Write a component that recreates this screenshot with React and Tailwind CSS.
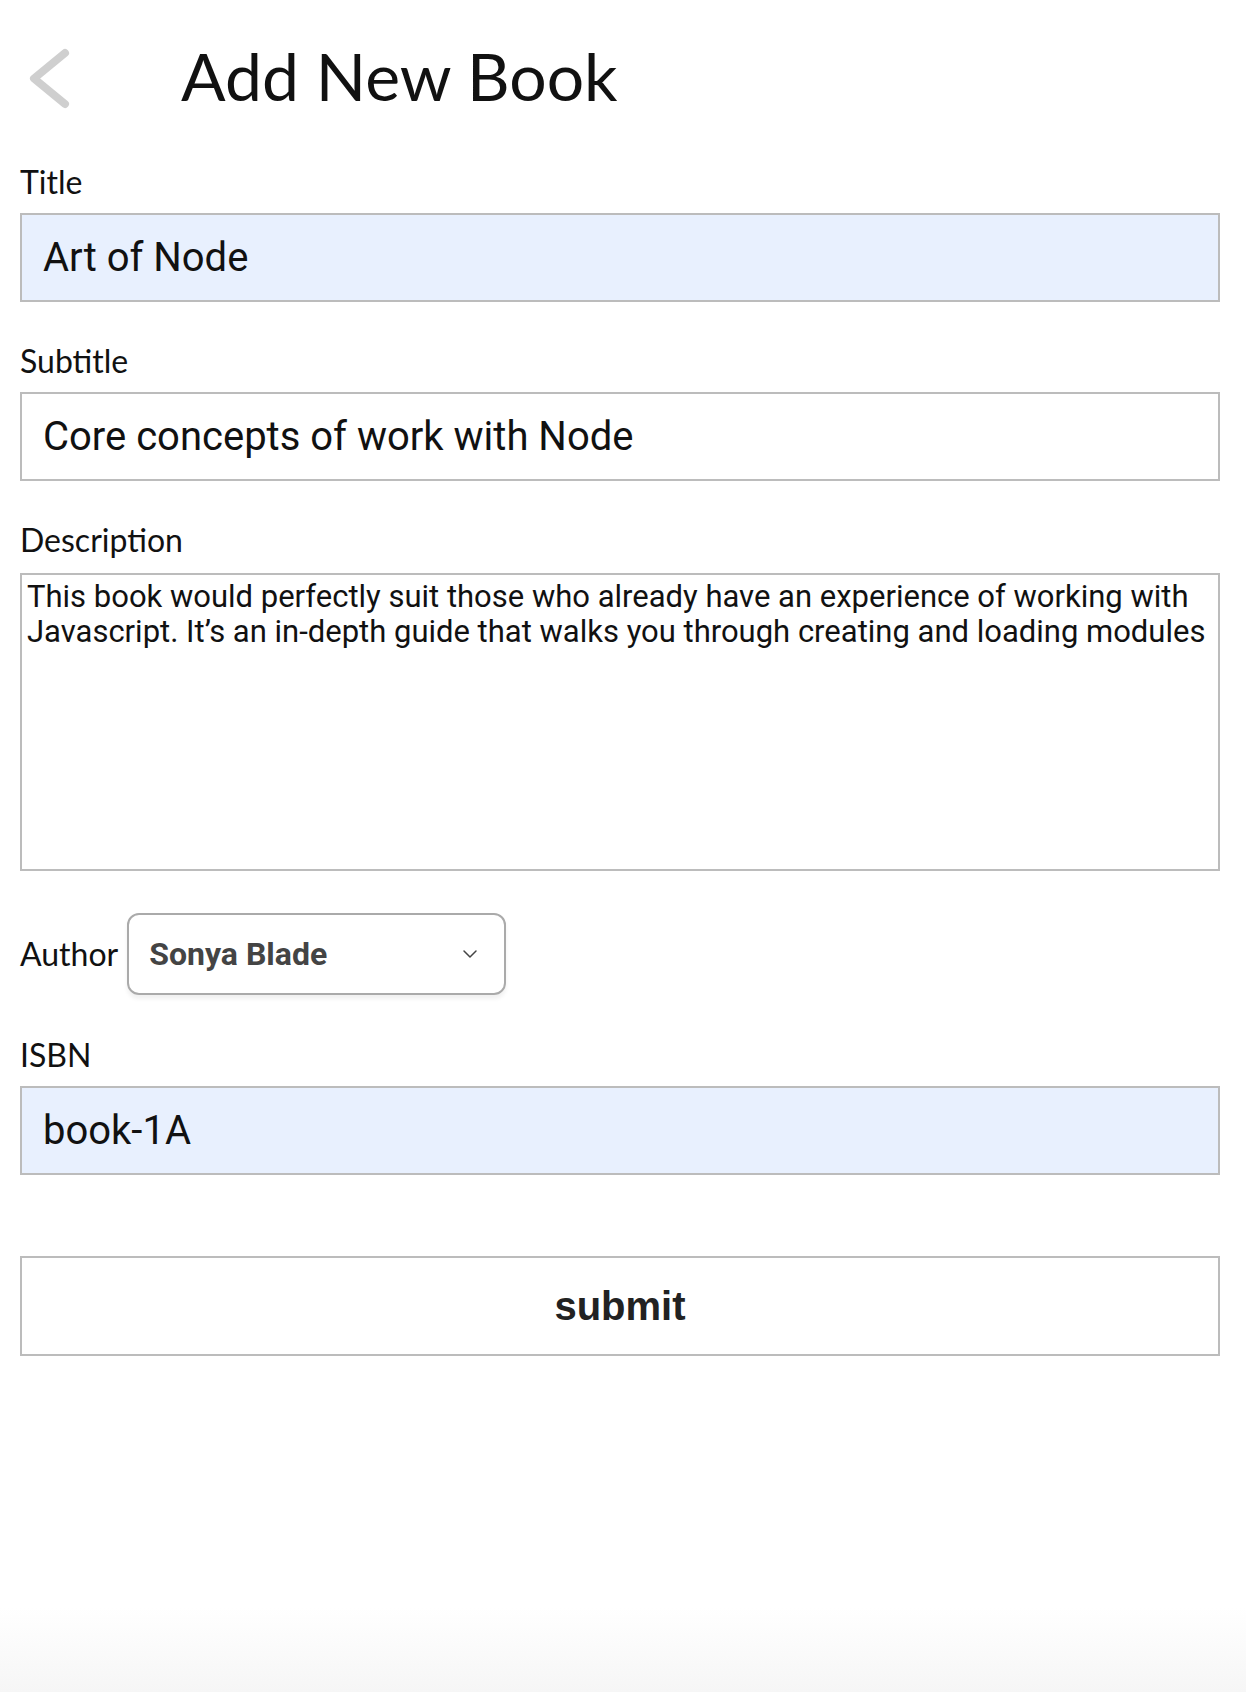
import React, { useState } from 'react';

const labelFont = { fontFamily: 'Lato, "Open Sans", sans-serif' };
const inputFont = { fontFamily: 'Roboto, "Noto Sans", sans-serif' };

const Field = ({ label, value, onChange, filled }) => (
  <div className="mb-[39px]">
    <label className="block pt-[2px] text-[32px] leading-[36px] text-[#111] mb-[13px]" style={labelFont}>
      {label}
    </label>
    <input
      value={value}
      onChange={(e) => onChange(e.target.value)}
      className={`block w-[1200px] h-[89px] border-2 border-[#bcbcbc] pl-[21px] text-[40px] text-[#111] outline-none ${filled ? 'bg-[#e8f0fe]' : 'bg-white'}`}
      style={inputFont}
    />
  </div>
);

const AddBook = () => {
  const [title, setTitle] = useState('Art of Node');
  const [subtitle, setSubtitle] = useState('Core concepts of work with Node');
  const [description, setDescription] = useState(
    'This book would perfectly suit those who already have an experience of working with Javascript. It\u2019s an in-depth guide that walks you through creating and loading modules'
  );
  const [isbn, setIsbn] = useState('book-1A');

  return (
    <div className="min-h-[1692px] bg-[linear-gradient(to_bottom,#ffffff_95%,#f6f6f6)] pt-[36px]">
      <header className="flex items-center h-[80px]">
        <button className="ml-[26px] mt-[6px]" title="Back">
          <svg width="48" height="68" viewBox="0 0 48 68" fill="none">
            <path d="M39 8 L8 33.5 L39 59" stroke="#cfcfcf" strokeWidth="8" strokeLinecap="round" strokeLinejoin="round" />
          </svg>
        </button>
        <h1 className="ml-[107px] text-[66px] leading-[80px] text-[#111]" style={labelFont}>
          Add New Book
        </h1>
      </header>

      <form className="ml-5 mt-[46px] w-[1200px]" onSubmit={(e) => e.preventDefault()}>
        <Field label="Title" value={title} onChange={setTitle} filled />
        <Field label="Subtitle" value={subtitle} onChange={setSubtitle} />

        <div className="mb-[42px]">
          <label className="block pt-[2px] text-[32px] leading-[36px] text-[#111] mb-[15px]" style={labelFont}>
            Description
          </label>
          <textarea
            value={description}
            onChange={(e) => setDescription(e.target.value)}
            className="block w-[1200px] h-[298px] border-2 border-[#bcbcbc] px-[5px] pt-[4px] text-[31px] leading-[35px] text-[#111] resize-none outline-none"
            style={inputFont}
          />
        </div>

        <div className="flex items-center mb-[40px]">
          <span className="text-[32px] leading-[36px] text-[#111]" style={labelFont}>Author</span>
          <div className="ml-[9px] w-[379px] h-[82px] border-2 border-[#aaa] rounded-[12px] shadow-[0_4px_4px_rgba(0,0,0,0.06)] flex items-center justify-between pl-[20px] pr-[26px]">
            <span className="text-[32px] font-bold text-[#444]" style={inputFont}>Sonya Blade</span>
            <svg width="16" height="10" viewBox="0 0 16 10" fill="none">
              <path d="M2 2 L8 8 L14 2" stroke="#444" strokeWidth="1.5" strokeLinecap="round" strokeLinejoin="round" />
            </svg>
          </div>
        </div>

        <Field label="ISBN" value={isbn} onChange={setIsbn} filled />

        <button
          type="submit"
          className="block w-[1200px] h-[100px] mt-[81px] border-2 border-[#bcbcbc] bg-white text-[40px] font-bold text-[#222]"
          style={{ fontFamily: '"Liberation Sans", Arial, sans-serif' }}
        >
          submit
        </button>
      </form>
    </div>
  );
};

export default function App() {
  return <AddBook />;
}
